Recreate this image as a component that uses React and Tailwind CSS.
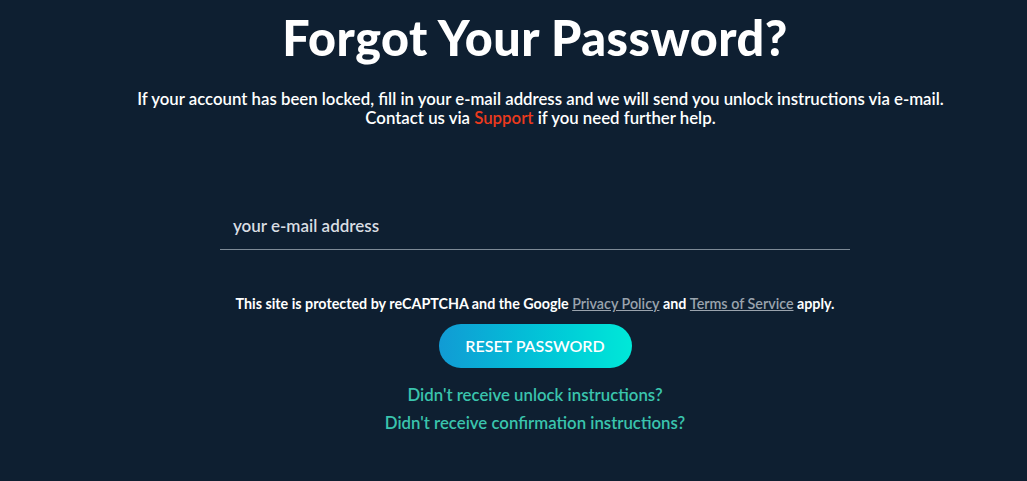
export default function App() {
  return (
    <div className="min-h-[481px] w-full bg-[#0e1f31] text-white flex flex-col items-center pl-[43px]" style={{ fontFamily: 'Lato, "Open Sans", sans-serif' }}>
      <h1 className="mt-[6px] text-[48.5px] leading-[62px] font-black tracking-[0.5px]">Forgot Your Password?</h1>
      <p className="mt-[21px] ml-[11px] text-[16.8px] leading-[19px] text-center font-semibold">
        If your account has been locked, fill in your e-mail address and we will send you unlock instructions via e-mail.
        <br />
        Contact us via <a className="text-[#ec3a1d]">Support</a> if you need further help.
      </p>
      <div className="mt-[87px] w-[630px] border-b border-[#7d8a96] px-[13px] pb-[11px]">
        <span className="text-[17px] leading-[20px] text-[#d9dde2] font-semibold">your e-mail address</span>
      </div>
      <p className="mt-[46px] text-[14.3px] leading-[16px] font-bold">
        This site is protected by reCAPTCHA and the Google <a className="underline text-[#9aa3ad] font-semibold">Privacy Policy</a> and <a className="underline text-[#9aa3ad] font-semibold">Terms of Service</a> apply.
      </p>
      <button className="mt-[12px] w-[193px] h-[44px] rounded-full bg-gradient-to-r from-[#119bd4] to-[#00e8d8] text-[16px] font-semibold text-white">RESET PASSWORD</button>
      <a className="mt-[17px] text-[16.8px] leading-[20px] text-[#3ac4ad] font-semibold">Didn't receive unlock instructions?</a>
      <a className="mt-[8px] text-[16.8px] leading-[20px] text-[#3ac4ad] font-semibold">Didn't receive confirmation instructions?</a>
    </div>
  );
}
